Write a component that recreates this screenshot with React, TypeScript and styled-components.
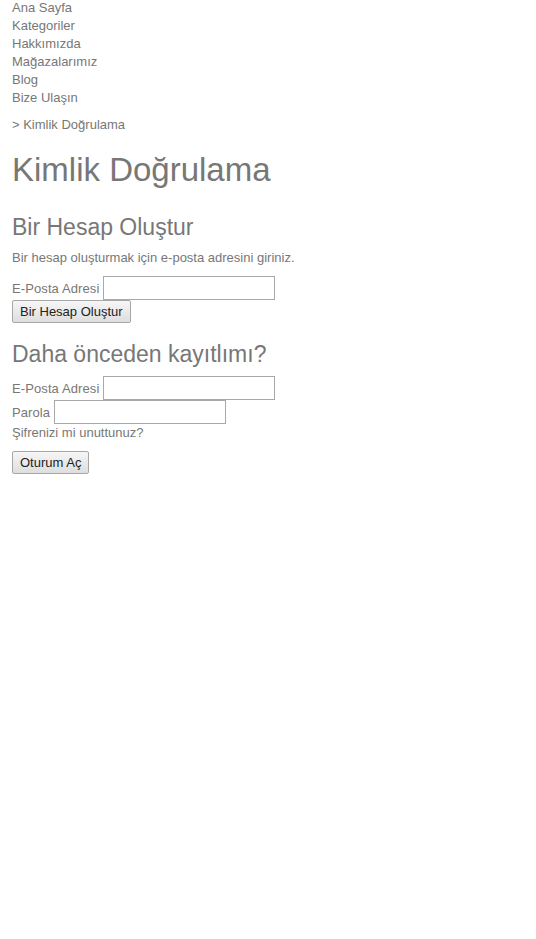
import React from "react";
import styled, { createGlobalStyle } from "styled-components";

const GlobalStyle = createGlobalStyle`
  html, body {
    margin: 0;
    padding: 0;
    background: #fff;
  }
  body {
    font-family: "Liberation Sans", Arial, sans-serif;
    font-size: 13px;
    color: #777;
  }
`;

const Page = styled.div`
  padding: 0 12px;
`;

const Nav = styled.ul`
  list-style: none;
  margin: -1px 0 0;
  padding: 0;
`;

const NavItem = styled.li`
  line-height: 18px;
`;

const Crumb = styled.div`
  margin-top: 9px;
  line-height: 18px;
`;

const Title = styled.h1`
  font-size: 33px;
  font-weight: normal;
  line-height: 38px;
  margin: 17px 0 0;
`;

const SubTitle = styled.h2<{ $top: number; $bottom: number }>`
  font-size: 23px;
  font-weight: normal;
  line-height: 28px;
  margin: ${(p) => p.$top}px 0 ${(p) => p.$bottom}px;
`;

const Text = styled.p`
  margin: 0 0 9px;
  line-height: 18px;
`;

const Row = styled.div`
  display: flex;
  align-items: center;
  gap: 4px;
  height: 24px;
`;

const Label = styled.span`
  letter-spacing: 0.1px;
`;

const Input = styled.input`
  box-sizing: border-box;
  width: 172px;
  height: 24px;
  border: 1px solid #a9a9a9;
  margin: 0;
  padding: 2px 4px;
  font: inherit;
`;

const Button = styled.button`
  box-sizing: border-box;
  height: 23px;
  padding: 0 7px;
  margin: 0;
  font-family: "Liberation Sans", Arial, sans-serif;
  font-size: 13px;
  color: #222;
  background: linear-gradient(#f6f6f6, #dedede);
  border: 1px solid #a7a7a7;
  border-radius: 2px;
`;

const Link = styled.div`
  line-height: 18px;
  margin: 0 0 9px;
`;

const navItems = [
  "Ana Sayfa",
  "Kategoriler",
  "Hakkımızda",
  "Mağazalarımız",
  "Blog",
  "Bize Ulaşın",
];

const App: React.FC = () => {
  return (
    <Page>
      <GlobalStyle />
      <Nav>
        {navItems.map((item) => (
          <NavItem key={item}>{item}</NavItem>
        ))}
      </Nav>
      <Crumb>&gt; Kimlik Doğrulama</Crumb>
      <Title>Kimlik Doğrulama</Title>

      <SubTitle $top={24} $bottom={8}>
        Bir Hesap Oluştur
      </SubTitle>
      <Text>Bir hesap oluşturmak için e-posta adresini giriniz.</Text>
      <Row>
        <Label>E-Posta Adresi</Label>
        <Input type="text" />
      </Row>
      <Button type="button">Bir Hesap Oluştur</Button>

      <SubTitle $top={17} $bottom={8}>
        Daha önceden kayıtlımı?
      </SubTitle>
      <Row>
        <Label>E-Posta Adresi</Label>
        <Input type="text" />
      </Row>
      <Row>
        <Label>Parola</Label>
        <Input type="password" />
      </Row>
      <Link>Şifrenizi mi unuttunuz?</Link>
      <Button type="button">Oturum Aç</Button>
    </Page>
  );
};

export default App;
